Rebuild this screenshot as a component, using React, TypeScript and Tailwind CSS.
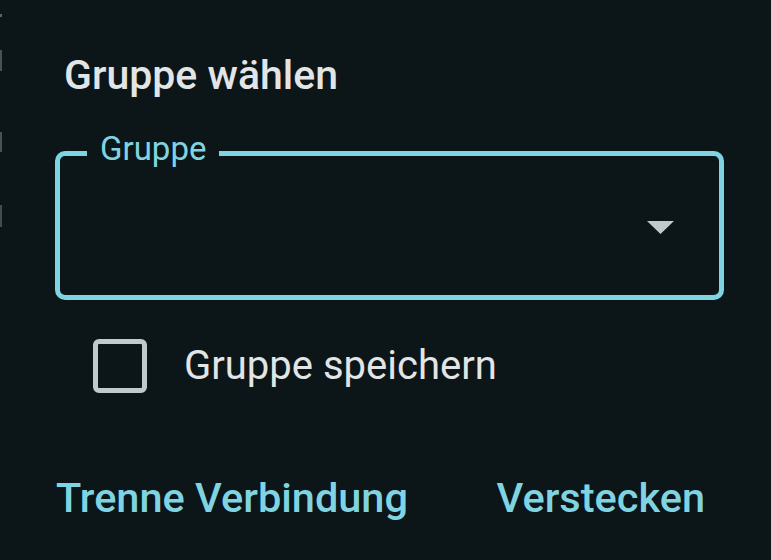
import React from 'react';

// Left-edge remnants of the screen behind the dialog
function EdgeMarks() {
  return (
    <div className="flex w-[2px] flex-col">
      <div className="mt-[14px] h-[3px] bg-[#5b6264]" />
      <div className="mt-[33px] h-[21px] bg-[#4a5153]" />
      <div className="mt-[61px] h-[20px] bg-[#4a5153]" />
      <div className="mt-[53px] h-[22px] bg-[#444b4d]" />
    </div>
  );
}

function GroupSelect() {
  return (
    <div className="relative mt-[52px] ml-[53px] mr-[47px] flex h-[149px] items-center justify-end rounded-[10px] border-[5px] border-[#80d4e1] pr-[45px]">
      <span className="absolute left-[27px] top-[-23px] bg-[#0c1517] px-[13px] text-[33px] leading-[32px] text-[#80d4e1]">
        Gruppe
      </span>
      <svg width="27" height="13" viewBox="0 0 27 13" className="mt-[4px]">
        <polygon points="0,0 27,0 13.5,13" fill="#c2c9cc" />
      </svg>
    </div>
  );
}

export default function App() {
  return (
    <div className="flex h-[560px] w-[771px] bg-[#0c1517] font-['Roboto',sans-serif]">
      <EdgeMarks />
      <div className="flex flex-1 flex-col">
        <h1 className="mt-[51px] ml-[62px] text-[41px] font-medium leading-[48px] text-[#e2e5e6]">
          Gruppe wählen
        </h1>

        <GroupSelect />

        <label className="mt-[39px] ml-[91px] flex items-center">
          <span className="h-[54px] w-[54px] rounded-[6px] border-[5px] border-[#c2c9cc]" />
          <span className="ml-[37px] text-[40px] leading-[48px] text-[#e2e5e6]">Gruppe speichern</span>
        </label>

        <div className="mt-[81px] ml-[54px] mr-[66px] flex justify-between text-[41.5px] font-medium leading-[48px] text-[#80d4e1]">
          <button>Trenne Verbindung</button>
          <button>Verstecken</button>
        </div>
      </div>
    </div>
  );
}
